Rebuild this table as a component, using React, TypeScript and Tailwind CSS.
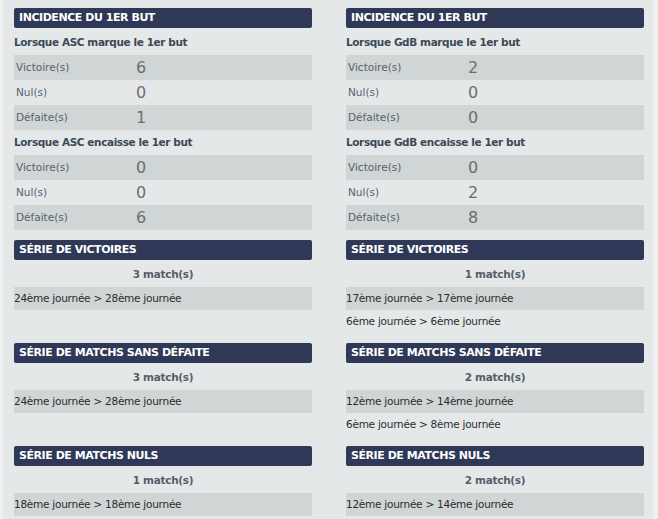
import React from 'react'

type Stat = { label: string; value: number }
type Incidence = { team: string; marque: Stat[]; encaisse: Stat[] }
type Serie = { title: string; matchs: number; ranges: string[] }

const font = { fontFamily: '"DejaVu Sans", Verdana, sans-serif' }

const left = {
  incidence: {
    team: 'ASC',
    marque: [
      { label: 'Victoire(s)', value: 6 },
      { label: 'Nul(s)', value: 0 },
      { label: 'Défaite(s)', value: 1 },
    ],
    encaisse: [
      { label: 'Victoire(s)', value: 0 },
      { label: 'Nul(s)', value: 0 },
      { label: 'Défaite(s)', value: 6 },
    ],
  } as Incidence,
  series: [
    { title: 'SÉRIE DE VICTOIRES', matchs: 3, ranges: ['24ème journée > 28ème journée'] },
    { title: 'SÉRIE DE MATCHS SANS DÉFAITE', matchs: 3, ranges: ['24ème journée > 28ème journée'] },
    { title: 'SÉRIE DE MATCHS NULS', matchs: 1, ranges: ['18ème journée > 18ème journée'] },
  ] as Serie[],
}

const right = {
  incidence: {
    team: 'GdB',
    marque: [
      { label: 'Victoire(s)', value: 2 },
      { label: 'Nul(s)', value: 0 },
      { label: 'Défaite(s)', value: 0 },
    ],
    encaisse: [
      { label: 'Victoire(s)', value: 0 },
      { label: 'Nul(s)', value: 2 },
      { label: 'Défaite(s)', value: 8 },
    ],
  } as Incidence,
  series: [
    { title: 'SÉRIE DE VICTOIRES', matchs: 1, ranges: ['17ème journée > 17ème journée', '6ème journée > 6ème journée'] },
    { title: 'SÉRIE DE MATCHS SANS DÉFAITE', matchs: 2, ranges: ['12ème journée > 14ème journée', '6ème journée > 8ème journée'] },
    { title: 'SÉRIE DE MATCHS NULS', matchs: 2, ranges: ['12ème journée > 14ème journée'] },
  ] as Serie[],
}

function Header({ children }: { children: React.ReactNode }) {
  return (
    <div className="h-[20px] mb-[2px] bg-[#2f3857] rounded-[2px] pl-[5px] flex items-center text-white font-bold text-[11px] tracking-[-0.45px]">
      {children}
    </div>
  )
}

function StatRows({ title, stats }: { title: string; stats: Stat[] }) {
  return (
    <>
      <div className="h-[25px] flex items-center font-bold text-[10.5px] tracking-[-0.4px] text-[#3c4957]">{title}</div>
      {stats.map((s, i) => (
        <div key={i} className={`h-[25px] flex items-center ${i % 2 === 0 ? 'bg-[#d0d5d6]' : ''}`}>
          <span className="w-[122px] pl-[2px] text-[10.5px] text-[#56626e]">{s.label}</span>
          <span className="text-[16px] text-[#6e6e6e]">{s.value}</span>
        </div>
      ))}
    </>
  )
}

function IncidenceBlock({ data }: { data: Incidence }) {
  return (
    <div className="mb-[10px]">
      <Header>INCIDENCE DU 1ER BUT</Header>
      <StatRows title={`Lorsque ${data.team} marque le 1er but`} stats={data.marque} />
      <StatRows title={`Lorsque ${data.team} encaisse le 1er but`} stats={data.encaisse} />
    </div>
  )
}

function SerieBlock({ serie }: { serie: Serie }) {
  return (
    <div className="mb-[10px]">
      <Header>{serie.title}</Header>
      <div className="h-[25px] flex items-center justify-center font-bold text-[10.5px] tracking-[-0.3px] text-[#555e67]">
        {serie.matchs} match(s)
      </div>
      {serie.ranges.map((r, i) => (
        <div key={i} className={`h-[23px] flex items-center text-[10.5px] tracking-[-0.25px] text-[#2c2c2c] ${i % 2 === 0 ? 'bg-[#d0d5d6]' : ''}`}>
          {r}
        </div>
      ))}
    </div>
  )
}

export default function App() {
  return (
    <div className="w-[658px] h-[519px] bg-[#eef0f1] overflow-hidden" style={font}>
      <div className="ml-[3px] w-[650px] h-full bg-[#e4e8e9] pt-[8px] pl-[11px] pr-[9px]">
        <div className="grid grid-cols-2 gap-x-[34px] items-start">
          <IncidenceBlock data={left.incidence} />
          <IncidenceBlock data={right.incidence} />
          {left.series.map((s, i) => (
            <React.Fragment key={i}>
              <SerieBlock serie={s} />
              <SerieBlock serie={right.series[i]} />
            </React.Fragment>
          ))}
        </div>
      </div>
    </div>
  )
}
